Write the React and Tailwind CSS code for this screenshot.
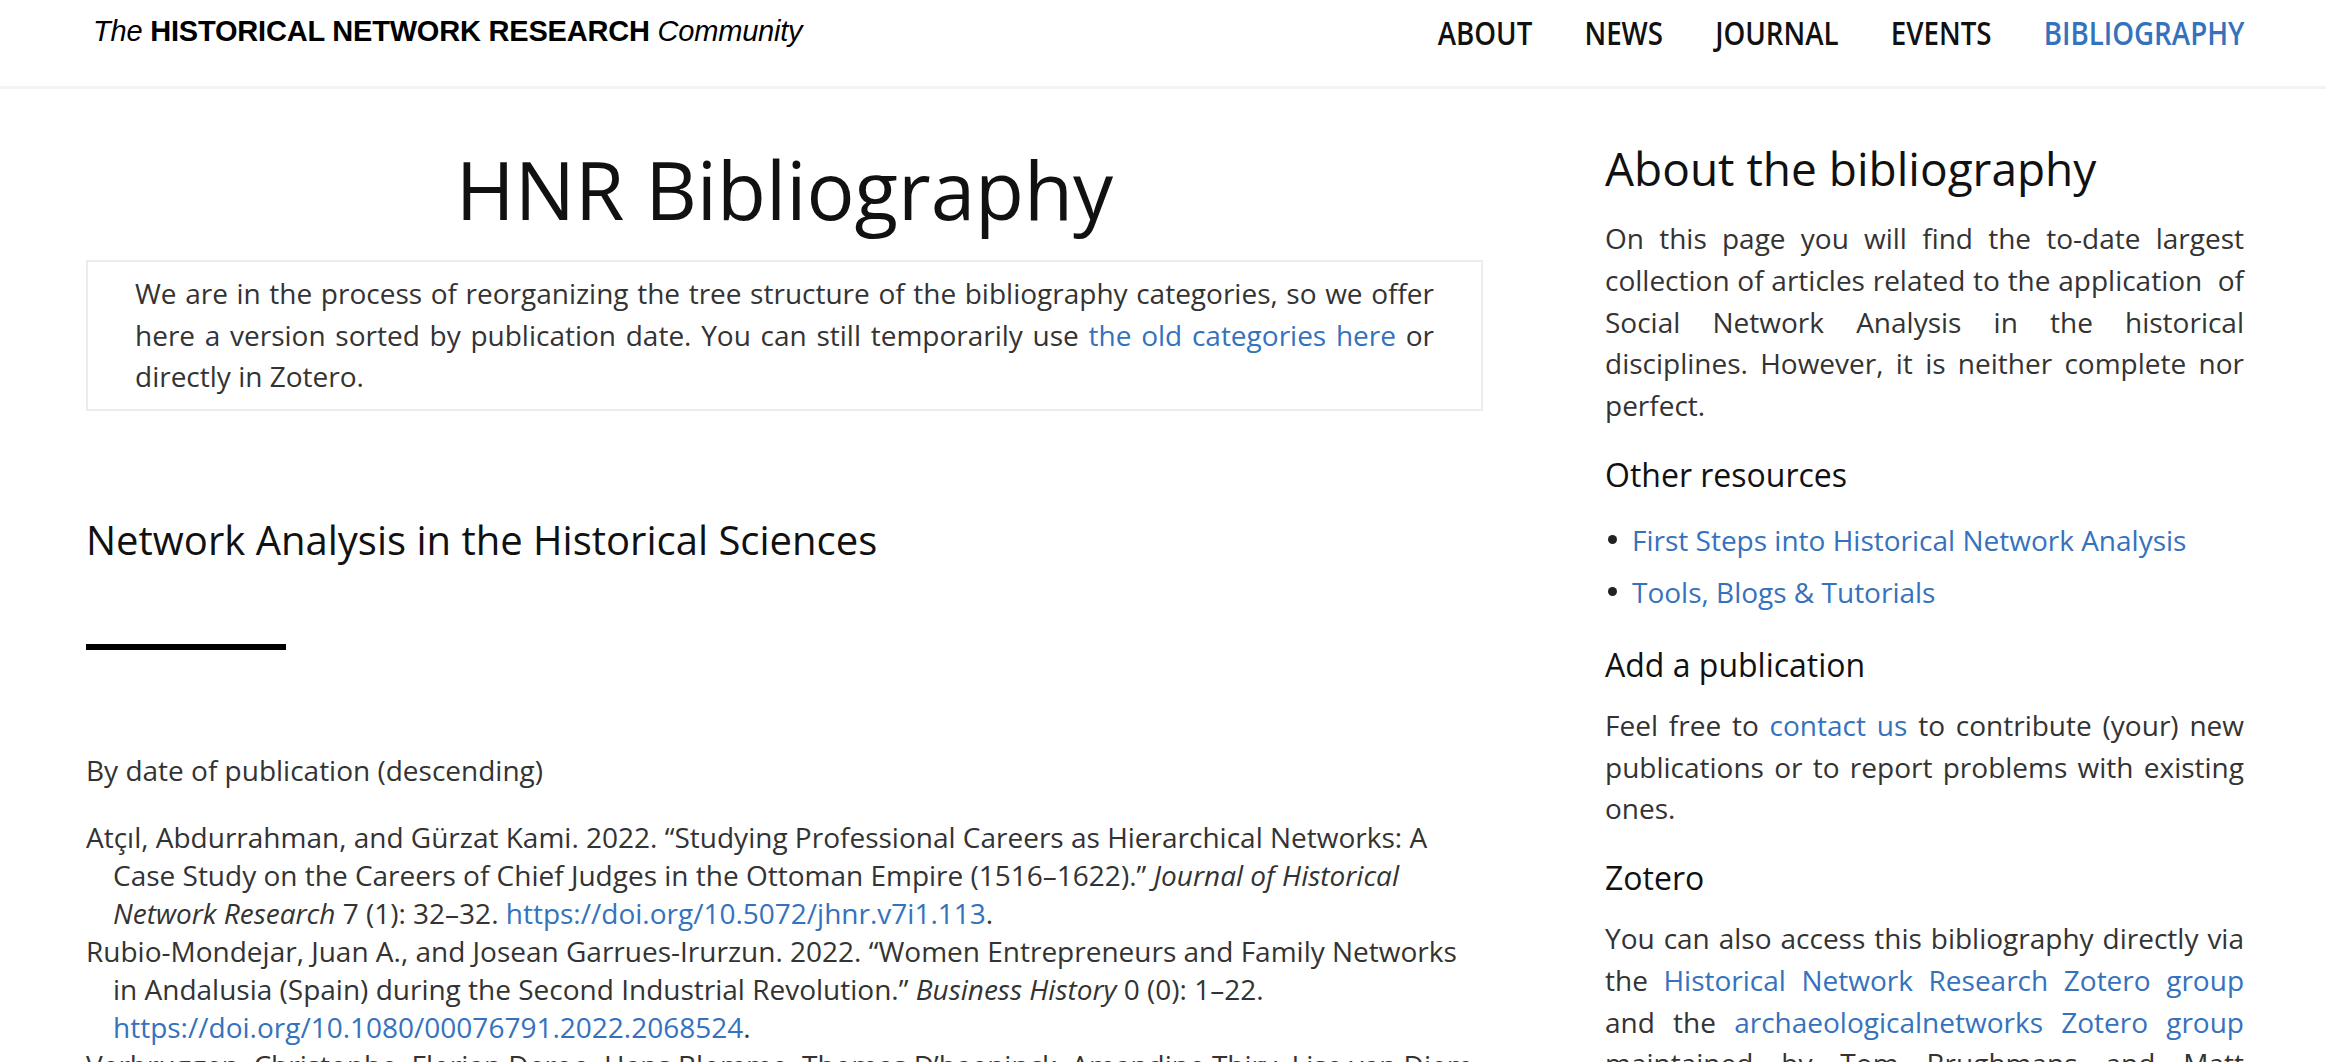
import React from "react";

const navItems = ["About", "News", "Journal", "Events", "Bibliography"];

const Link = ({ children }) => (
  <a href="#" className="text-[#3572bd]">{children}</a>
);

const entries = [
  <>
    Atçıl, Abdurrahman, and Gürzat Kami. 2022. “Studying Professional Careers as Hierarchical Networks: A Case Study on the Careers of Chief Judges in the Ottoman Empire (1516–1622).” <i>Journal of Historical Network Research</i> 7 (1): 32–32. <Link>https://doi.org/10.5072/jhnr.v7i1.113</Link>.
  </>,
  <>
    Rubio-Mondejar, Juan A., and Josean Garrues-Irurzun. 2022. “Women Entrepreneurs and Family Networks in Andalusia (Spain) during the Second Industrial Revolution.” <i>Business History</i> 0 (0): 1–22. <Link>https://doi.org/10.1080/00076791.2022.2068524</Link>.
  </>,
  <>
    Verbruggen, Christophe, Florian Deroo, Hans Blomme, Thomas D’haeninck, Amandine Thiry, Lise van Diem, and Julie Birkholz. 2022. “Circulating Cultures: Reconstructing Transnational Networks in the Long Nineteenth Century.” <i>Journal of Historical Network Research</i> 7 (1): 1–30.
  </>,
];

const Header = () => (
  <header className="h-[89px] border-b-[3px] border-[#f3f3f3] bg-white flex items-start justify-between pl-[93px] pr-[82px] pt-[14px]">
    <div className="text-[29px] leading-none text-black tracking-[-0.2px] pt-[3px]" style={{ fontFamily: '"Liberation Sans", Arial, sans-serif' }}>
      <i>The</i> <b>HISTORICAL NETWORK RESEARCH</b> <i>Community</i>
    </div>
    {/* nav type is narrower than plain Open Sans, squeeze it a bit */}
    <nav className="flex gap-[62px] text-[33px] leading-none font-semibold uppercase pt-[2px] origin-right scale-x-[0.84]">
      {navItems.map((item) => (
        <a key={item} href="#" className={item === "Bibliography" ? "text-[#3572bd]" : "text-[#111]"}>{item}</a>
      ))}
    </nav>
  </header>
);

const Sidebar = () => (
  <aside className="w-[639px] shrink-0 text-[28px] text-[#333]">
    <h2 className="text-[46px] leading-[55px] text-[#111] mb-[22px]">About the bibliography</h2>
    <p className="leading-[41.75px] text-justify">
      On this page you will find the to-date largest collection of articles related to the application&nbsp; of Social Network Analysis in the historical disciplines. However, it is neither complete nor perfect.
    </p>
    <h3 className="text-[32px] leading-[38px] text-[#111] mt-[29px] mb-[21px]">Other resources</h3>
    <ul className="pt-[4px] pb-[4px] flex flex-col gap-[10px]">
      {["First Steps into Historical Network Analysis", "Tools, Blogs & Tutorials"].map((t) => (
        <li key={t} className="flex items-center leading-[42px]">
          <span className="w-[9px] h-[9px] rounded-full bg-[#222] ml-[3px] mr-[15px]"></span>
          <Link>{t}</Link>
        </li>
      ))}
    </ul>
    <h3 className="text-[32px] leading-[38px] text-[#111] mt-[29px] mb-[21px]">Add a publication</h3>
    <p className="leading-[41.75px] text-justify">
      Feel free to <Link>contact us</Link> to contribute (your) new publications or to report problems with existing ones.
    </p>
    <h3 className="text-[32px] leading-[38px] text-[#111] mt-[29px] mb-[21px]">Zotero</h3>
    <p className="leading-[41.75px] text-justify">
      You can also access this bibliography directly via the <Link>Historical Network Research Zotero group</Link> and the <Link>archaeologicalnetworks Zotero group</Link> maintained by Tom Brughmans and Matt Peeples.
    </p>
  </aside>
);

export default function App() {
  return (
    <div className="min-h-screen bg-white" style={{ fontFamily: '"Open Sans", sans-serif' }}>
      <Header />
      <main className="flex gap-[122px] pl-[86px] pr-[82px] pt-[52px]">
        <section className="w-[1397px] shrink-0 text-[28px] text-[#333]">
          <h1 className="text-[80px] leading-[96px] text-center text-[#111] mb-[23px]">HNR Bibliography</h1>
          <div className="border-2 border-[#ececec] px-[47px] py-[11px] leading-[41.5px] text-justify">
            We are in the process of reorganizing the tree structure of the bibliography categories, so we offer here a version sorted by publication date. You can still temporarily use <Link>the old categories here</Link> or directly in Zotero.
          </div>
          <h2 className="mt-[105px] text-[40px] leading-[48px] text-[#111]">Network Analysis in the Historical Sciences</h2>
          <div className="mt-[80px] w-[200px] h-[6px] bg-black"></div>
          <p className="mt-[99px] leading-[42px]">By date of publication (descending)</p>
          <div className="mt-[27px]">
            {entries.map((e, i) => (
              <div key={i} className="leading-[38px] pl-[27px] -indent-[27px]">{e}</div>
            ))}
          </div>
        </section>
        <Sidebar />
      </main>
    </div>
  );
}
